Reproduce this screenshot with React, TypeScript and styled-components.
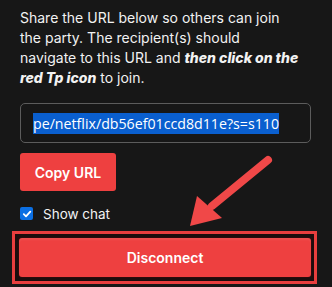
import React from 'react';
import styled, { createGlobalStyle } from 'styled-components';

const GlobalStyle = createGlobalStyle`
  html, body {
    margin: 0;
    padding: 0;
    background: #171717;
  }
  body {
    font-family: Inter, "Open Sans", sans-serif;
  }
`;

const Panel = styled.div`
  position: relative;
  width: 332px;
  height: 287px;
  box-sizing: border-box;
  padding: 8px 21px 0 20px;
  background: #171717;
  color: #f2f2f2;
  overflow: hidden;
`;

const Intro = styled.p`
  margin: 0;
  font-size: 14px;
  line-height: 20px;
  white-space: nowrap;
`;

const Emph = styled.b`
  font-style: italic;
  font-weight: 800;
`;

const UrlField = styled.div`
  margin-top: 15px;
  height: 40px;
  box-sizing: border-box;
  border: 1px solid #5c5c5c;
  border-radius: 5px;
  padding: 0 12px;
  display: flex;
  align-items: center;
  overflow: hidden;
  white-space: nowrap;
`;

const Selected = styled.span`
  background: #0a5fcf;
  color: #ffffff;
  font-family: "Open Sans", sans-serif;
  font-size: 14.2px;
  line-height: 21px;
`;

const RedButton = styled.button<{ wide?: boolean }>`
  display: block;
  border: none;
  border-radius: 3px;
  background: #ee4040;
  color: #ffffff;
  font-family: Inter, "Open Sans", sans-serif;
  font-weight: 600;
  font-size: 14px;
  cursor: pointer;
  width: ${({ wide }) => (wide ? '100%' : '96px')};
  height: ${({ wide }) => (wide ? '39px' : '38px')};
  margin-top: ${({ wide }) => (wide ? '0' : '10px')};
  box-shadow: ${({ wide }) =>
    wide ? 'inset 0 2px 2px rgba(255,255,255,0.08), 0 0 0 1px #2a0c0c' : 'none'};
`;

const CheckRow = styled.label`
  display: flex;
  align-items: center;
  gap: 10px;
  margin-top: 16px;
  height: 13px;
  font-size: 13.5px;
`;

const CheckBox = styled.span`
  width: 13px;
  height: 13px;
  border-radius: 2px;
  background: #0b6fe3;
  display: flex;
  align-items: center;
  justify-content: center;
`;

const Highlight = styled.div`
  margin: 11px -6px 0 -8px;
  border: 3px solid #e83e3e;
  padding: 4px 3px 4px 4px;
  background: #1c0d0d;
`;

const Arrow = styled.svg`
  position: absolute;
  left: 0;
  top: 0;
  pointer-events: none;
`;

export default function App() {
  return (
    <>
      <GlobalStyle />
      <Panel>
        <Intro>
          Share the URL below so others can join
          <br />
          the party. The recipient(s) should
          <br />
          navigate to this URL and <Emph>then click on the</Emph>
          <br />
          <Emph>red Tp icon</Emph> to join.
        </Intro>
        <UrlField>
          <Selected>pe/netflix/db56ef01ccd8d11e?s=s110</Selected>
        </UrlField>
        <RedButton>Copy URL</RedButton>
        <CheckRow>
          <CheckBox>
            <svg width="10" height="10" viewBox="0 0 10 10">
              <path d="M1.8 5.2 L4 7.3 L8.3 2.6" fill="none" stroke="#fff" strokeWidth="1.8" strokeLinecap="round" strokeLinejoin="round" />
            </svg>
          </CheckBox>
          Show chat
        </CheckRow>
        <Highlight>
          <RedButton wide>Disconnect</RedButton>
        </Highlight>
        <Arrow width="332" height="287" viewBox="0 0 332 287">
          <line x1="268" y1="160" x2="212" y2="206" stroke="#f04848" strokeWidth="8" strokeLinecap="round" />
          <polygon points="190,226 197,196 222,218" fill="#f04848" />
        </Arrow>
      </Panel>
    </>
  );
}
